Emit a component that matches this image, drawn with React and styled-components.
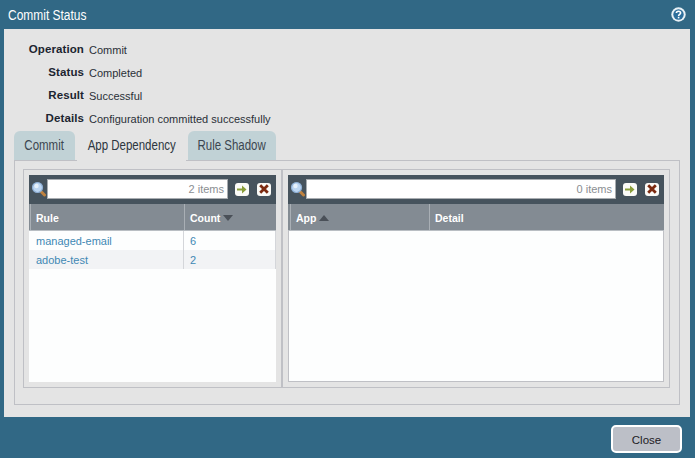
import React from "react";
import styled, { createGlobalStyle } from "styled-components";

const GlobalStyle = createGlobalStyle`
  html, body {
    margin: 0;
    padding: 0;
    width: 695px;
    height: 458px;
    overflow: hidden;
    background: #316885;
    font-family: "Liberation Sans", sans-serif;
  }
  * { box-sizing: border-box; }
`;

const Dialog = styled.div`
  width: 695px;
  height: 458px;
  display: flex;
  flex-direction: column;
  background: #316885;
`;

const TitleBar = styled.div`
  height: 29px;
  display: flex;
  align-items: center;
  justify-content: space-between;
  padding: 0 9px 0 8px;
`;

const Narrow = styled.span`
  display: inline-block;
  font-size: 14px;
  white-space: nowrap;
  transform: scaleX(${(p) => p.$scale});
  transform-origin: ${(p) => p.$origin || "center"};
`;

const Title = styled.div`
  color: #fff;
  margin-top: 1px;
`;

const Body = styled.div`
  height: 388px;
  margin: 0 5px 0 4px;
  background: #e4e4e4;
  padding: 12px 10px 12px 10px;
  display: flex;
  flex-direction: column;
`;

const Info = styled.div`
  display: grid;
  grid-template-columns: 70px 1fr;
  column-gap: 5px;
  grid-auto-rows: 23px;
`;

const Label = styled.div`
  text-align: right;
  font-size: 11.5px;
  font-weight: 700;
  letter-spacing: 0.1px;
  color: #1c2530;
  line-height: 17px;
`;

const Value = styled.div`
  font-size: 11px;
  color: #2a3038;
  line-height: 19px;
`;

const Tabs = styled.div`
  display: flex;
  height: 29px;
  margin-top: -2px;
  position: relative;
  z-index: 1;
`;

const Tab = styled.div`
  position: relative;
  height: 29px;
  width: ${(p) => p.$width}px;
  padding-bottom: 2px;
  display: flex;
  align-items: center;
  justify-content: center;
  color: ${(p) => (p.$active ? "#2d3640" : "#3c4650")};
  background: ${(p) => (p.$active ? "#e4e4e4" : "#c1d2d6")};
  border-radius: 6px 6px 0 0;
  ${(p) =>
    p.$active &&
    `&::after {
      content: "";
      position: absolute;
      left: 2px;
      right: 2px;
      bottom: -1px;
      height: 1px;
      background: #e4e4e4;
    }`}
`;

const TabPanel = styled.div`
  flex: 1;
  border: 1px solid #bfc0c5;
  padding: 8px 9px 16px 8px;
  display: flex;
`;

const PanelFrame = styled.div`
  flex: 1;
  border: 1px solid #bfc0c5;
  display: flex;
  padding: 5px;
`;

const LeftPane = styled.div`
  width: 247px;
  display: flex;
  flex-direction: column;
  background: #fdfefe;
`;

const Divider = styled.div`
  width: 2px;
  margin: -5px 5px;
  background: #bfc0c5;
`;

const RightPane = styled.div`
  flex: 1;
  display: flex;
  flex-direction: column;
`;

const RightGrid = styled.div`
  flex: 1;
  background: #fdfefe;
  border: 1px solid #bfc0c5;
  border-top: none;
`;

const SearchBar = styled.div`
  height: 29px;
  display: flex;
  align-items: center;
  padding: 0 5px 1px 3px;
  background: #46535d;
`;

const SearchField = styled.div`
  flex: 1;
  height: 20px;
  margin-right: 7px;
  background: #fff;
  border: 1px solid #a9adb1;
  color: #8a8e92;
  font-size: 11px;
  line-height: 19px;
  text-align: right;
  padding-right: 3px;
`;

const IconButton = styled.div`
  width: 14px;
  height: 13px;
  border-radius: 3px;
  background: #fbfbf8;
  display: flex;
  align-items: center;
  justify-content: center;
  margin-left: ${(p) => p.$gap || 0}px;
`;

const HeaderRow = styled.div`
  height: 27px;
  display: flex;
  padding-left: ${(p) => p.$inset}px;
  background: #838b93;
  border-bottom: 1px solid #b9bec3;
`;

const HeaderCell = styled.div`
  width: ${(p) => p.$width}px;
  flex: ${(p) => (p.$width ? "none" : 1)};
  padding: 1px 0 0 5px;
  display: flex;
  align-items: center;
  gap: 3px;
  color: #fff;
  font-size: 10.5px;
  font-weight: 700;
  border-left: 1px solid #a9afb5;
`;

const SortArrow = styled.span`
  width: 0;
  height: 0;
  border-left: 5px solid transparent;
  border-right: 5px solid transparent;
  ${(p) =>
    p.$up
      ? "border-bottom: 6px solid #4a5058;"
      : "border-top: 6px solid #4a5058;"}
`;

const Row = styled.div`
  height: 19px;
  display: flex;
  background: ${(p) => (p.$alt ? "#f2f3f5" : "#fdfefe")};
`;

const Cell = styled.div`
  width: ${(p) => p.$width}px;
  padding: 1px 0 0 ${(p) => p.$pad}px;
  color: #3f88b4;
  font-size: 11px;
  line-height: 18px;
  border-right: 1px solid #d4d6da;
`;

const Footer = styled.div`
  flex: 1;
  display: flex;
  justify-content: flex-end;
  align-items: flex-start;
  padding: 8px 13px 0 0;
`;

const CloseButton = styled.div`
  width: 71px;
  height: 28px;
  padding-top: 1px;
  border: 2px solid #fff;
  border-radius: 5px;
  background: #bcbfc7;
  display: flex;
  align-items: center;
  justify-content: center;
  color: #1c2024;
  font-size: 11.5px;
`;

function HelpIcon() {
  return (
    <svg width="15" height="15" viewBox="0 0 15 15">
      <circle cx="7.5" cy="7.5" r="7.2" fill="#e8f1f6" />
      <circle cx="7.5" cy="7.5" r="5.2" fill="#2d6f9c" />
      <path
        d="M5.4 6 C5.4 3.7 9.6 3.7 9.6 6 C9.6 7.4 7.6 7.4 7.6 9"
        fill="none"
        stroke="#fff"
        strokeWidth="1.6"
      />
      <rect x="6.8" y="9.8" width="1.6" height="1.6" fill="#fff" />
    </svg>
  );
}

function SearchIcon() {
  return (
    <svg width="15" height="16" viewBox="0 0 15 16">
      <path d="M9.5 11 L12.5 14" stroke="#c0823f" strokeWidth="3" strokeLinecap="round" />
      <circle cx="5.5" cy="6.5" r="5" fill="#bcd6f2" stroke="#8fb0d6" strokeWidth="1.2" />
      <circle cx="4.5" cy="5" r="2.2" fill="#e6f1fb" />
    </svg>
  );
}

function GoIcon() {
  return (
    <svg width="10" height="9" viewBox="0 0 10 9">
      <path d="M0 3.4 H5 V0.5 L9.5 4.5 L5 8.5 V5.6 H0 Z" fill="#8a9e3a" />
    </svg>
  );
}

function ClearIcon() {
  return (
    <svg width="10" height="10" viewBox="0 0 10 10">
      <path d="M1.2 1.2 L8.8 8.8 M8.8 1.2 L1.2 8.8" stroke="#7c2a10" strokeWidth="2.8" />
    </svg>
  );
}

function Search({ count }) {
  return (
    <SearchBar>
      <SearchIcon />
      <SearchField>{count} items</SearchField>
      <IconButton><GoIcon /></IconButton>
      <IconButton $gap={8}><ClearIcon /></IconButton>
    </SearchBar>
  );
}

const details = [
  ["Operation", "Commit"],
  ["Status", "Completed"],
  ["Result", "Successful"],
  ["Details", "Configuration committed successfully"],
];

const rules = [
  { name: "managed-email", count: 6 },
  { name: "adobe-test", count: 2 },
];

export default function App() {
  return (
    <Dialog>
      <GlobalStyle />
      <TitleBar>
        <Title><Narrow $scale={0.855} $origin="left">Commit Status</Narrow></Title>
        <HelpIcon />
      </TitleBar>
      <Body>
        <Info>
          {details.map(([label, value]) => (
            <React.Fragment key={label}>
              <Label>{label}</Label>
              <Value>{value}</Value>
            </React.Fragment>
          ))}
        </Info>
        <Tabs>
          <Tab $width={61}><Narrow $scale={0.82}>Commit</Narrow></Tab>
          <Tab $width={113} $active><Narrow $scale={0.82}>App Dependency</Narrow></Tab>
          <Tab $width={88}><Narrow $scale={0.82}>Rule Shadow</Narrow></Tab>
        </Tabs>
        <TabPanel>
          <PanelFrame>
            <LeftPane>
              <Search count={2} />
              <HeaderRow $inset={1}>
                <HeaderCell $width={154}>Rule</HeaderCell>
                <HeaderCell>Count<SortArrow /></HeaderCell>
              </HeaderRow>
              {rules.map((rule, i) => (
                <Row key={rule.name} $alt={i % 2 === 1}>
                  <Cell $width={155} $pad={7}>{rule.name}</Cell>
                  <Cell $width={92} $pad={6}>{rule.count}</Cell>
                </Row>
              ))}
            </LeftPane>
            <Divider />
            <RightPane>
              <Search count={0} />
              <HeaderRow $inset={2}>
                <HeaderCell $width={139}>App<SortArrow $up /></HeaderCell>
                <HeaderCell>Detail</HeaderCell>
              </HeaderRow>
              <RightGrid />
            </RightPane>
          </PanelFrame>
        </TabPanel>
      </Body>
      <Footer>
        <CloseButton>Close</CloseButton>
      </Footer>
    </Dialog>
  );
}
